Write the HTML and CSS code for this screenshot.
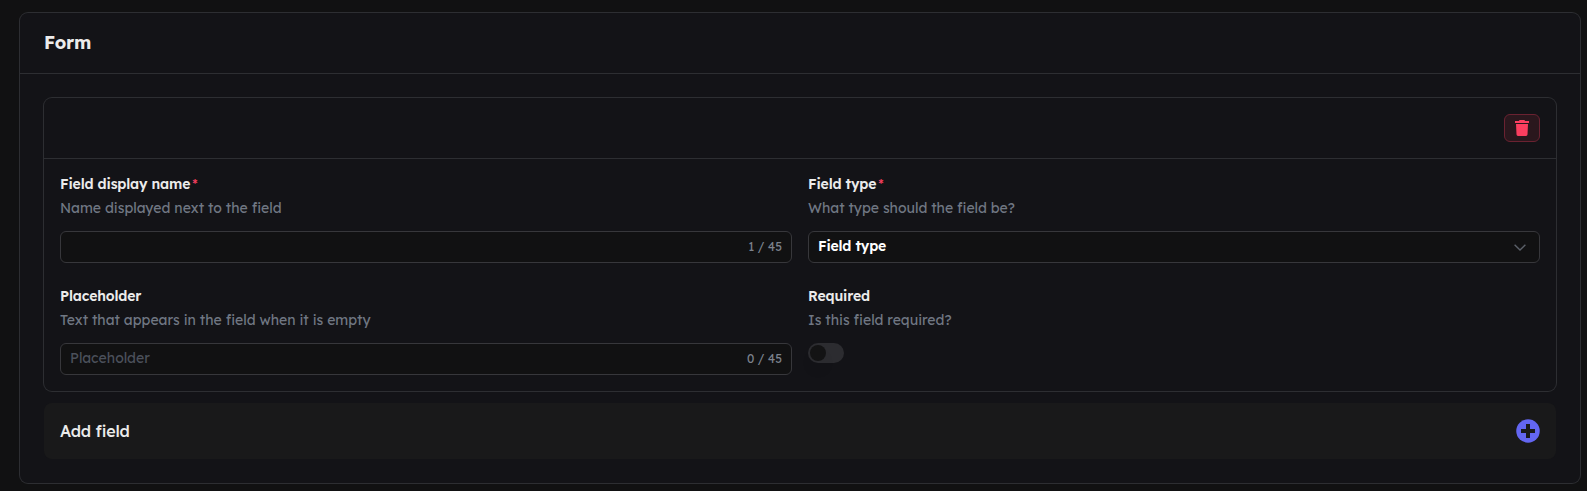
FILE: index.html
```
<!DOCTYPE html>
<html lang="en">
  <head>
    <meta charset="utf-8">
    <meta name="viewport" content="width=device-width, initial-scale=1.0">
    <title>Form</title>
    <link rel="stylesheet" href="styles.css">
  </head>
  <body>
    <section class="card">
      <header class="card-header">
        <h1>Form</h1>
      </header>

      <div class="card-body">
        <div class="field-card">
          <div class="field-header">
            <button class="delete-button" type="button" aria-label="Delete field">
              <svg width="14" height="16" viewBox="0 0 14 16" fill="currentColor">
                <path d="M4 .9 4.500 0h5l.5.9h4V3H0V.9z"/>
                <path d="M1 4h12l-.5 10.600A1.500 1.500 0 0 1 11 16H3a1.500 1.500 0 0 1-1.500-1.400z"/>
              </svg>
            </button>
          </div>

          <div class="field-grid">
            <div class="field">
              <label class="label" for="name">Field display name<span class="required">*</span></label>
              <p class="hint">Name displayed next to the field</p>
              <div class="input">
                <input id="name" type="text">
                <span class="count">1 / 45</span>
              </div>
            </div>
            <div class="field">
              <label class="label">Field type<span class="required">*</span></label>
              <p class="hint">What type should the field be?</p>
              <div class="input select">
                <span class="select-value">Field type</span>
                <svg class="chevron" width="12" height="7" viewBox="0 0 12 7" fill="none" stroke="currentColor" stroke-width="1.400">
                  <path d="M.6.7 6 6 11.400.7"/>
                </svg>
              </div>
            </div>
            <div class="field">
              <label class="label" for="placeholder">Placeholder</label>
              <p class="hint">Text that appears in the field when it is empty</p>
              <div class="input">
                <input id="placeholder" type="text" placeholder="Placeholder">
                <span class="count">0 / 45</span>
              </div>
            </div>
            <div class="field">
              <label class="label">Required</label>
              <p class="hint">Is this field required?</p>
              <div class="switch"><span class="knob"></span></div>
            </div>
          </div>
        </div>

        <div class="add-field">
          <span>Add field</span>
          <svg width="24" height="24" viewBox="0 0 24 24">
            <circle class="add-circle" cx="12" cy="12" r="11.750"/>
            <path class="add-plus" d="M10 5h4v5h5v4h-5v5h-4v-5H5v-4h5z"/>
          </svg>
        </div>
      </div>
    </section>
  </body>
</html>
```
FILE: styles.css
```
* {
  box-sizing: border-box;
}
body {
  margin: 0;
  padding: 13px 7px 8px 20px;
  background-color: #111112;
  color: #ebebeb;
  font-family: Lexend, Inter, sans-serif;
  font-size: 14px;
  overflow: hidden;
}
h1, p {
  margin: 0;
}
.card, .field-card {
  border-radius: 8px;
  background-color: #131317;
  box-shadow: 0 0 0 1px #2d2e32;
}
.card-header {
  display: flex;
  align-items: center;
  height: 61px;
  padding: 0 24px 2px;
  border-bottom: 1px solid #2d2e32;
}
h1 {
  font-size: 18px;
  font-weight: 700;
  letter-spacing: -0.2px;
}
.card-body {
  display: flex;
  flex-direction: column;
  gap: 12px;
  padding: 24px;
}
.field-header {
  display: flex;
  align-items: center;
  justify-content: flex-end;
  height: 61px;
  padding: 0 16px;
  border-bottom: 1px solid #2d2e32;
}
.delete-button {
  display: flex;
  align-items: center;
  justify-content: center;
  width: 36px;
  height: 28px;
  padding: 0;
  border: 1px solid #6a2231;
  border-radius: 6px;
  background-color: #2a171d;
  color: #fb3e5f;
}
.field-grid {
  display: grid;
  grid-template-columns: 1fr 1fr;
  gap: 24px 16px;
  padding: 16px;
}
.field {
  height: 88px;
}
.label {
  display: block;
  height: 21px;
  line-height: 18px;
  font-weight: 600;
  letter-spacing: -0.13px;
}
.required {
  margin-left: 2px;
  color: #f43f5e;
  font-weight: 400;
}
.hint {
  height: 35px;
  line-height: 24px;
  color: #707783;
}
.input {
  display: flex;
  align-items: center;
  height: 32px;
  padding: 0 9px;
  border: 1px solid #37373b;
  border-radius: 6px;
  background-color: #111112;
}
.input input {
  flex: 1;
  padding: 0 0 2px;
  border: none;
  outline: none;
  background: none;
  color: inherit;
  font: inherit;
}
.input input::placeholder {
  color: #4b505b;
}
.count {
  padding-bottom: 1px;
  color: #7c828d;
  font-size: 12px;
}
.select {
  justify-content: space-between;
  padding-right: 13px;
}
.select-value {
  padding-bottom: 2px;
  color: #fff;
  font-weight: 600;
  letter-spacing: -0.15px;
}
.chevron {
  color: #5b6069;
}
.switch {
  width: 36px;
  height: 20px;
  padding: 2px;
  border-radius: 10px;
  background-color: #2c2c30;
}
.knob {
  display: block;
  width: 16px;
  height: 16px;
  border-radius: 50%;
  background-color: #131314;
  box-shadow: 0 10px 15px -3px rgba(0, 0, 0, 0.1);
}
.add-field {
  display: flex;
  align-items: center;
  justify-content: space-between;
  height: 56px;
  padding: 0 16px;
  border-radius: 8px;
  background-color: #19191a;
  font-size: 16px;
  font-weight: 500;
  letter-spacing: -0.12px;
}
.add-circle {
  fill: #6366f1;
}
.add-plus {
  fill: #19191a;
}
```
